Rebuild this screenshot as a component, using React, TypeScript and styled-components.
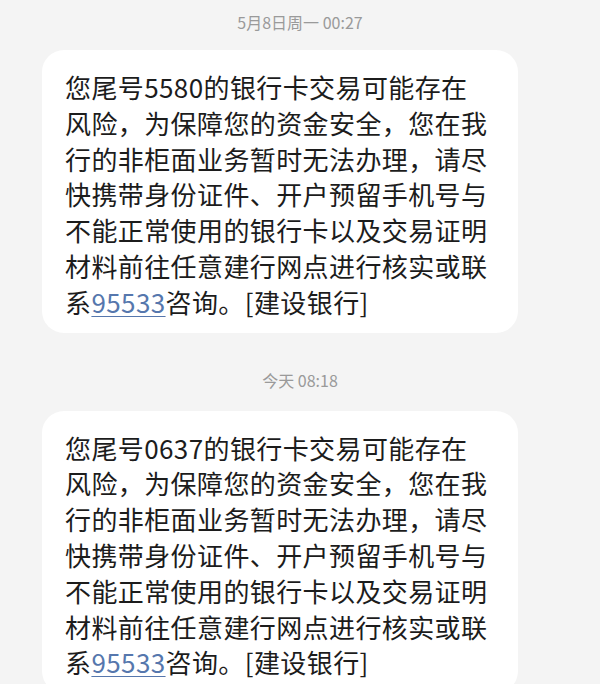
import styled, { createGlobalStyle } from "styled-components";

const GlobalStyle = createGlobalStyle`
  html, body {
    margin: 0;
    padding: 0;
    background: #f4f4f4;
  }
  body {
    font-family: "Noto Sans CJK SC", "Noto Sans", sans-serif;
  }
`;

const Thread = styled.div`
  width: 600px;
  height: 684px;
  overflow: hidden;
  display: flex;
  flex-direction: column;
  background: #f4f4f4;
`;

const Stamp = styled.div<{ $top: number; $bottom: number }>`
  margin: ${(p) => p.$top}px 0 ${(p) => p.$bottom}px;
  text-align: center;
  font-size: 16px;
  line-height: 20px;
  color: #9a9a9a;
`;

const Bubble = styled.div`
  margin-left: 42px;
  width: 476px;
  box-sizing: border-box;
  padding: 19px 0 13px 23px;
  background: #ffffff;
  border-radius: 22px;
  flex-shrink: 0;
`;

const Line = styled.div`
  font-size: 26px;
  letter-spacing: 0.4px;
  line-height: 35.8px;
  color: #1c1c1c;
  white-space: nowrap;
`;

const Phone = styled.a`
  color: #5677ad;
  text-decoration: underline;
  text-decoration-thickness: 1px;
  text-underline-offset: 3px;
`;

const lines = (card: string) => [
  `您尾号${card}的银行卡交易可能存在`,
  "风险，为保障您的资金安全，您在我",
  "行的非柜面业务暂时无法办理，请尽",
  "快携带身份证件、开户预留手机号与",
  "不能正常使用的银行卡以及交易证明",
  "材料前往任意建行网点进行核实或联",
];

const Message = ({ card }: { card: string }) => (
  <Bubble>
    {lines(card).map((text) => (
      <Line key={text}>{text}</Line>
    ))}
    <Line>
      系<Phone href="tel:95533">95533</Phone>咨询。[建设银行]
    </Line>
  </Bubble>
);

const App = () => {
  return (
    <>
      <GlobalStyle />
      <Thread>
        <Stamp $top={12} $bottom={18}>
          5月8日周一 00:27
        </Stamp>
        <Message card="5580" />
        <Stamp $top={37} $bottom={21}>
          今天 08:18
        </Stamp>
        <Message card="0637" />
      </Thread>
    </>
  );
};

export default App;
